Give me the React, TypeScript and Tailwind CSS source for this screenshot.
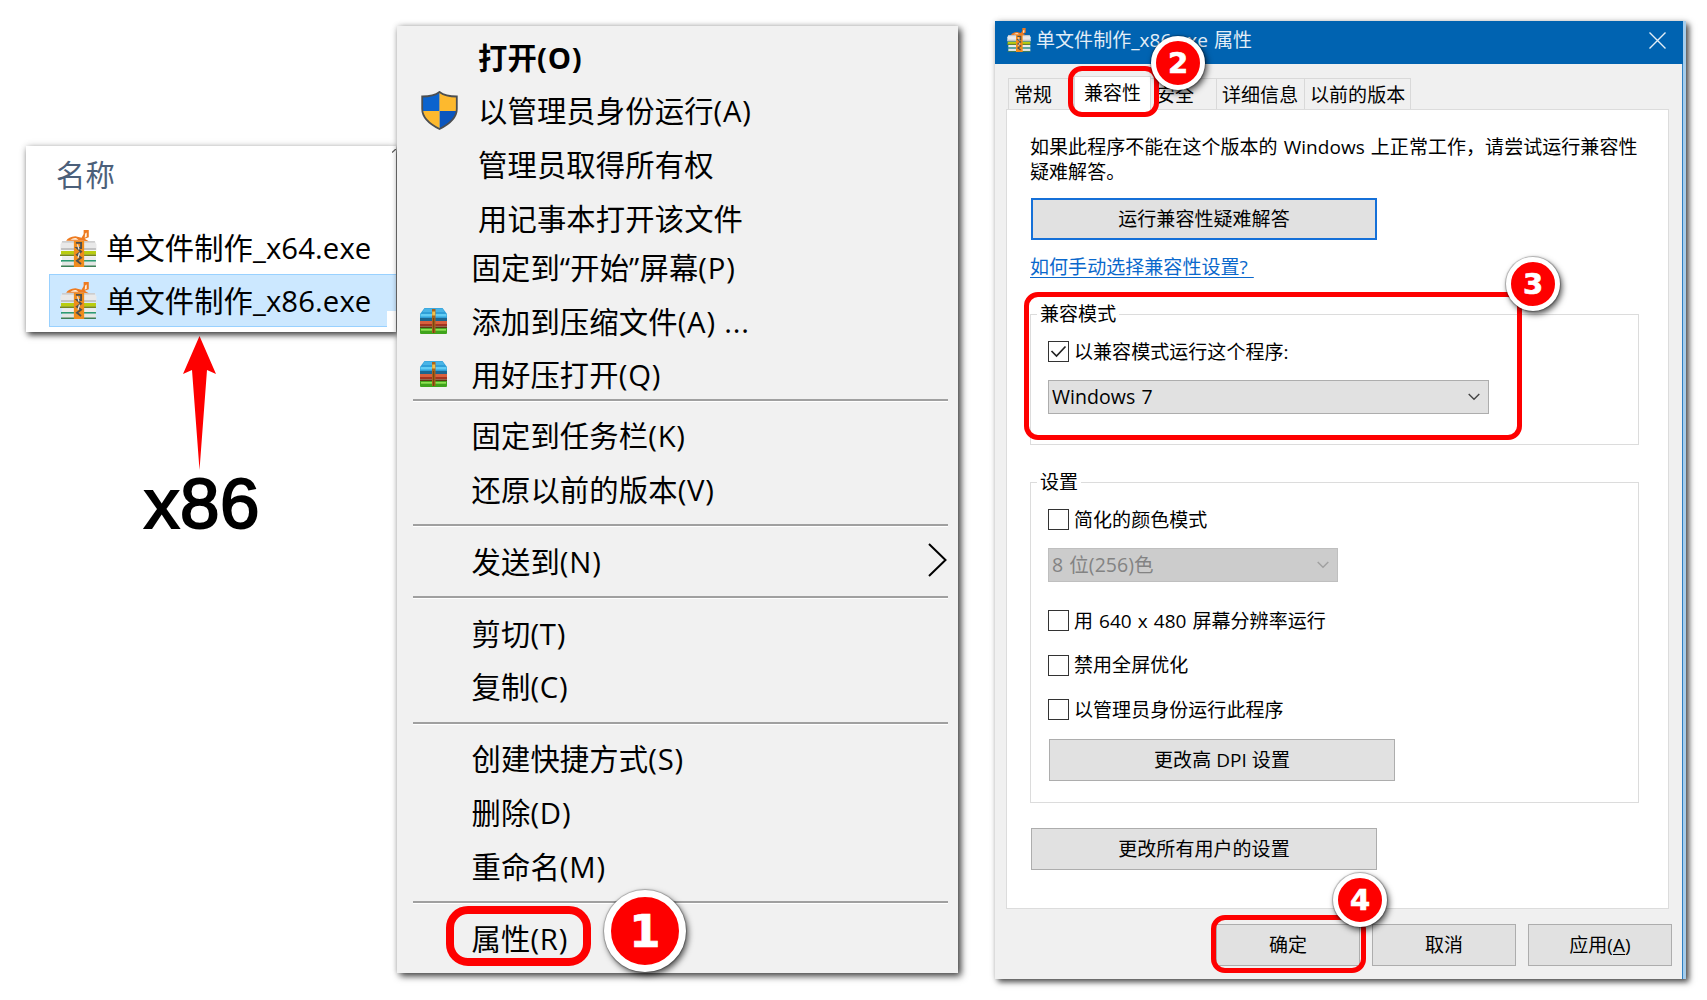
import { ReactNode } from "react";

interface MenuItem {
  label: string;
  hotkey?: string;
  icon?: "shield" | "archive";
  bold?: boolean;
  submenu?: boolean;
}

const topItems: MenuItem[] = [
  { label: "打开", hotkey: "(O)", bold: true },
  { label: "以管理员身份运行", hotkey: "(A)", icon: "shield" },
  { label: "管理员取得所有权" },
  { label: "用记事本打开该文件" },
];

const pinItems: MenuItem[] = [
  { label: "固定到“开始”屏幕", hotkey: "(P)" },
  { label: "添加到压缩文件", hotkey: "(A) ...", icon: "archive" },
  { label: "用好压打开", hotkey: "(Q)", icon: "archive" },
];

const menuGroups: MenuItem[][] = [
  [
    { label: "固定到任务栏", hotkey: "(K)" },
    { label: "还原以前的版本", hotkey: "(V)" },
  ],
  [{ label: "发送到", hotkey: "(N)", submenu: true }],
  [
    { label: "剪切", hotkey: "(T)" },
    { label: "复制", hotkey: "(C)" },
  ],
  [
    { label: "创建快捷方式", hotkey: "(S)" },
    { label: "删除", hotkey: "(D)" },
    { label: "重命名", hotkey: "(M)" },
  ],
  [{ label: "属性", hotkey: "(R)" }],
];

function GiftIcon({ className }: { className: string }) {
  return (
    <svg viewBox="0 0 36 36" className={className}>
      {/* stacked books */}
      <path d="M2 11h32l1.500 3v6H.5v-6z" fill="#e9e9e9" />
      <path d="M2 11.500h32" stroke="#c4c4c4" strokeWidth="1.200" />
      <path d="M1 17.500h34v2H1z" fill="#c2c2c2" />
      <path d="M1 20.500h34v3.500H1z" fill="#b9cc10" />
      <path d="M0 24.500h35" stroke="#76861e" strokeWidth="1.500" />
      <path d="M2 25.500h33v4H2z" fill="#ececec" />
      <path d="M1 30h34" stroke="#2d9a72" strokeWidth="1.800" />
      <path d="M2 31h33v4H2z" fill="#e4e6e4" />
      <path d="M1 35.200h34" stroke="#3f7f55" strokeWidth="1.500" />
      {/* ribbon and bow */}
      <path d="M13.500 10.500h10V36h-10z" fill="#f08c1c" />
      <path d="M15.500 12.500h5v5h-4l4 3.500-4 3 4 3-4 3 4 3" stroke="#4f4f4f" strokeWidth="1.800" fill="none" />
      <path d="M17 14l1.500 5M19 22l-1.500 5" stroke="#e8e8e8" strokeWidth="1.200" />
      <path d="M6 10.500q2-4 9-4.500l6 1.500 2-3.500V0h5v7l-4 1.500 4 2.500-6-.5z" fill="#ee7b20" />
      <path d="M10 9.500q3-2 6-1.500l2 1.500zM24.500 3.500l1.500-1v4l-2 1z" fill="#fff1df" />
    </svg>
  );
}

function ShieldIcon() {
  return (
    <svg viewBox="0 0 37 39" className="-mt-[2px] h-[39px] w-[37px]">
      <path d="M18.500 1C14 4.500 8 5.500 1.500 5.500V18c0 9 7 15 17 20z" fill="#0b63ce" />
      <path d="M18.500 1C23 4.500 29 5.500 35.500 5.500V18c0 9-7 15-17 20z" fill="#0b56be" />
      <path d="M18.500 1C23 4.500 29 5.500 35.500 5.500V20h-17z" fill="#fdb92e" />
      <path d="M18.500 20H1.700c.8 8 7.800 13.500 16.800 18z" fill="#fdb92e" />
      <path
        d="M18.500 1C14 4.500 8 5.500 1.200 5.500V18c0 9 7.300 15 17.300 20 10-5 17.300-11 17.300-20V5.500C29 5.500 23 4.500 18.500 1z"
        fill="none"
        stroke="#4c4f52"
        strokeWidth="1.800"
      />
    </svg>
  );
}

function ArchiveIcon() {
  return (
    <svg viewBox="0 0 27 26" className="-mt-[2px] h-[26px] w-[27px]">
      <path d="M4.500 0h18L27 6v5H0V6z" fill="#2f9fd8" />
      <path d="M4.500 .5h18l2 3.500h-22z" fill="#49b4e6" />
      <path d="M.5 6h26v2.500H.5z" fill="#62ccf4" />
      <path d="M0 10h27v3H0z" fill="#1c6690" />
      <path d="M0 13h27v3.500H0z" fill="#d9603e" />
      <path d="M0 16h27v2.500H0z" fill="#a33420" />
      <path d="M0 18.500h27V20H0z" fill="#5c3a14" />
      <path d="M0 20h27v5q0 1-1 1H1q-1 0-1-1z" fill="#3fa31c" />
      <path d="M1 21.800h25" stroke="#8fe052" strokeWidth="1.800" />
      <path d="M12 1h3.500v24H12z" fill="#a8641c" />
      <path d="M12.200 3.500h3v4h-3z" fill="#f3c04c" />
      <path d="M13.700 10v15" stroke="#6d3d10" strokeWidth="1" />
    </svg>
  );
}

function MenuRow({ item, indent }: { item: MenuItem; indent: string }) {
  return (
    <div className="flex h-[53.6px] items-center pr-[11px]">
      <div className={`flex shrink-0 items-center ${indent}`}>
        {item.icon === "shield" && <ShieldIcon />}
        {item.icon === "archive" && <ArchiveIcon />}
      </div>
      <span className={`grow whitespace-pre ${item.bold ? "font-bold" : ""}`}>
        {item.label}
        {item.hotkey && <span className="tracking-[0.8px]">{item.hotkey}</span>}
      </span>
      {item.submenu && (
        <svg viewBox="0 0 19 34" className="-mt-[3px] h-[34px] w-[19px]">
          <path d="M1 1l16.500 16L1 33" fill="none" stroke="#000" strokeWidth="2" />
        </svg>
      )}
    </div>
  );
}

function Separator() {
  return <div className="mt-2 mb-[7.500px] ml-[16px] h-[3px] w-[535px] border-t-2 border-b border-t-[#a0a0a0] border-b-white" />;
}

function Badge({ n, className }: { n: number; className: string }) {
  return (
    <div
      className={`absolute flex items-center justify-center rounded-full border-white bg-[#fe0000] font-['DejaVu_Sans'] leading-none font-bold text-white shadow-[2px_3px_6px_rgba(0,0,0,0.7),0_0_1px_1px_rgba(0,0,0,0.25)] [-webkit-text-stroke:0.7px_white] ${className}`}
    >
      {n}
    </div>
  );
}

function Ring({ className }: { className: string }) {
  return <div className={`absolute border-[#fe0000] ${className}`} />;
}

function Checkbox({ label, checked }: { label: string; checked?: boolean }) {
  return (
    <label className="flex h-[21px] items-center gap-[5px]">
      <span className="flex size-[21px] items-center justify-center border border-[#333] bg-white">
        {checked && (
          <svg viewBox="0 0 17 13" className="h-[13px] w-[17px]">
            <path d="M1.500 6l5 5L15.500 1.500" fill="none" stroke="#222" strokeWidth="1.700" />
          </svg>
        )}
      </span>
      <span className="pt-px">{label}</span>
    </label>
  );
}

function Select({ value, disabled }: { value: string; disabled?: boolean }) {
  return (
    <div
      className={`flex h-[34px] items-center justify-between border pr-[8px] pl-[3px] text-[19.5px] ${
        disabled ? "w-[290px] border-[#bfbfbf] bg-[#ccc] text-[#838383]" : "w-[441px] border-[#adadad] bg-[#e1e1e1]"
      }`}
    >
      <span className="pb-px">{value}</span>
      <svg viewBox="0 0 12 8" className="h-[8px] w-[12px]">
        <path d="M.7 1L6 6.300 11.300 1" fill="none" stroke={disabled ? "#a0a0a0" : "#444"} strokeWidth="1.400" />
      </svg>
    </div>
  );
}

function Button({ children, className }: { children: ReactNode; className: string }) {
  return (
    <button className={`flex items-center justify-center bg-[#e1e1e1] ${className}`}>
      <span>{children}</span>
    </button>
  );
}

function FilePanel() {
  return (
    <div className="relative h-[186px] w-[370px] bg-white pt-[13px] text-[29.3px] leading-[32px] tracking-[0.1px] shadow-[2px_3px_6px_rgba(0,0,0,0.75),0_0_8px_rgba(0,0,0,0.12)]">
      <div className="pl-[30px] text-[#4c607a]">名称</div>
      <div className="mt-[32px] ml-[23px] flex h-[50px] items-center pl-[11px]">
        <GiftIcon className="mr-[9px] size-[37px]" />
        <span>单文件制作_x64.exe</span>
      </div>
      <div className="mt-px ml-[23px] flex h-[53px] items-center border border-r-0 border-[#99d1ff] bg-[#cce8ff] pl-[10px]">
        <GiftIcon className="mr-[9px] size-[37px]" />
        <span>单文件制作_x86.exe</span>
      </div>
      <div className="absolute right-0 bottom-[4px] h-[17px] w-[9px] bg-white" />
      <svg viewBox="0 0 4 4" className="absolute top-[3px] right-0 size-1">
        <path d="M0 3.500L4 0" stroke="#555" strokeWidth="1.300" />
      </svg>
    </div>
  );
}

function ContextMenu() {
  return (
    <div className="relative h-[947px] w-[561px] bg-[#f1f1f1] pt-[5px] text-[29.3px] leading-[32px] tracking-[0.15px] shadow-[3px_3px_7px_rgba(0,0,0,0.75),0_0_6px_rgba(0,0,0,0.15)]">
      {topItems.map((item) => (
        <MenuRow key={item.label} item={item} indent="w-[81px] pl-[24px]" />
      ))}
      <div className="-mt-[4px] -mb-[11.500px]">
        {pinItems.map((item) => (
          <MenuRow key={item.label} item={item} indent="w-[74.5px] pl-[22.5px]" />
        ))}
      </div>
      {menuGroups.map((group, i) => (
        <div key={i}>
          <Separator />
          {group.map((item) => (
            <MenuRow key={item.label} item={item} indent="w-[74.5px]" />
          ))}
        </div>
      ))}
      <Ring className="top-[880px] left-[49px] h-[60px] w-[145px] rounded-[22px] border-8" />
      <Badge n={1} className="top-[864px] left-[207px] size-[82px] border-[7.5px] text-[45px]" />
    </div>
  );
}

const tabBase = "flex items-center border border-b-0 border-[#d9d9d9] pt-[2px] pl-[5px]";

function PropertiesDialog() {
  return (
    <div className="relative h-[958px] w-[691px] border-r-3 border-[#a5cdec] bg-[#f0f0f0] text-[19px] leading-[25px] tracking-[0.05px] [word-spacing:1px] shadow-[inset_-1px_0_0_#2f80c2,3px_3px_6px_rgba(0,0,0,0.7),0_0_6px_rgba(0,0,0,0.12)]">
      <div className="flex h-[43px] items-center bg-[#0063b1] pr-[17px] pb-[5px] pl-[12px] text-[#e3eef7]">
        <GiftIcon className="mr-[5px] size-[24px]" />
        <span className="grow">单文件制作_x86.exe 属性</span>
        <svg viewBox="0 0 17 17" className="size-[17px]">
          <path d="M.5.5l16 16M16.500.5l-16 16" stroke="#e3eef7" strokeWidth="1.400" />
        </svg>
      </div>

      <div className="flex h-[45px] items-end pl-[13px]">
        <div className={`${tabBase} h-[31px] w-[66px]`}>常规</div>
        <div className="z-10 -mb-px flex h-[34px] w-[77px] items-center justify-center border border-b-0 border-[#d9d9d9] bg-white">
          兼容性
        </div>
        <div className={`${tabBase} h-[31px] w-[66px] border-l-0`}>安全</div>
        <div className={`${tabBase} h-[31px] w-[88px] border-l-0`}>详细信息</div>
        <div className={`${tabBase} h-[31px] w-[106px] border-l-0`}>以前的版本</div>
      </div>

      <div className="ml-[11px] h-[800px] w-[663px] border border-[#dcdcdc] bg-white pt-[25px] pl-[23px]">
        <p className="w-[620px]">
          如果此程序不能在这个版本的 Windows 上正常工作，请尝试运行兼容性
          <br />
          疑难解答。
        </p>
        <Button className="mt-[13px] ml-px h-[42px] w-[346px] border-2 border-[#1570d8]">运行兼容性疑难解答</Button>
        <a className="mt-[15px] block text-[#0a68cc] underline underline-offset-[3px]">如何手动选择兼容性设置?&nbsp;</a>

        <fieldset className="mt-[24px] h-[141px] w-[609px] border border-[#dcdcdc] pl-[17px]">
          <legend className="-ml-[11px] h-[20px] px-[3px] leading-[21px]">兼容模式</legend>
          <div className="pt-[17px]">
            <Checkbox label="以兼容模式运行这个程序:" checked />
          </div>
          <div className="mt-[18px]">
            <Select value="Windows 7" />
          </div>
        </fieldset>

        <fieldset className="mt-[27px] h-[331px] w-[609px] border border-[#dcdcdc] pl-[17px]">
          <legend className="-ml-[11px] h-[20px] px-[3px] leading-[21px]">设置</legend>
          <div className="flex flex-col pt-[17px]">
            <Checkbox label="简化的颜色模式" />
            <div className="mt-[18px] mb-[28px]">
              <Select value="8 位(256)色" disabled />
            </div>
            <div className="flex flex-col gap-[23.5px]">
              <Checkbox label="用 640 x 480 屏幕分辨率运行" />
              <Checkbox label="禁用全屏优化" />
              <Checkbox label="以管理员身份运行此程序" />
            </div>
            <Button className="mt-[19px] ml-px h-[42px] w-[346px] border border-[#adadad]">更改高 DPI 设置</Button>
          </div>
        </fieldset>

        <Button className="mt-[25px] ml-px h-[42px] w-[346px] border border-[#adadad]">更改所有用户的设置</Button>
      </div>

      <div className="mt-[15px] flex gap-[12px] pl-[221px]">
        <Button className="h-[42px] w-[144px] border border-[#adadad]">确定</Button>
        <Button className="h-[42px] w-[144px] border border-[#adadad]">取消</Button>
        <Button className="h-[42px] w-[144px] border border-[#adadad]">
          应用(<u className="underline-offset-2">A</u>)
        </Button>
      </div>

      <Ring className="top-[45px] left-[73px] z-20 h-[51px] w-[91px] rounded-[14px] border-5" />
      <Badge n={2} className="top-[15px] left-[156px] z-20 size-[54px] border-5 text-[29px]" />
      <Ring className="top-[271px] left-[29px] h-[148px] w-[498px] rounded-[14px] border-5" />
      <Badge n={3} className="top-[236px] left-[511px] size-[54px] border-5 text-[29px]" />
      <Ring className="top-[894px] left-[216px] h-[58px] w-[155px] rounded-[14px] border-5" />
      <Badge n={4} className="top-[852px] left-[338px] size-[54px] border-5 text-[29px]" />
    </div>
  );
}

export default function App() {
  return (
    <div className="flex h-[1000px] w-[1707px] items-start overflow-hidden bg-white font-['Open_Sans','Noto_Sans_CJK_SC',sans-serif] text-black">
      <div className="mt-[146px] ml-[26px] w-[370px] shrink-0">
        <FilePanel />
        <svg viewBox="0 0 34 134" className="mt-[4px] ml-[157px] h-[134px] w-[34px]">
          <path d="M16.500 0L33 38l-9-4-7.500 100L9 34l-9 4z" fill="#fe0000" />
        </svg>
        <div className="-mt-[2px] ml-[118px] font-['Liberation_Sans'] text-[71px] leading-[72px] tracking-[0.5px] [-webkit-text-stroke:2px_black]">
          x86
        </div>
      </div>
      <div className="mt-[26px] ml-px shrink-0">
        <ContextMenu />
      </div>
      <div className="mt-[21px] ml-[37px] shrink-0">
        <PropertiesDialog />
      </div>
    </div>
  );
}
